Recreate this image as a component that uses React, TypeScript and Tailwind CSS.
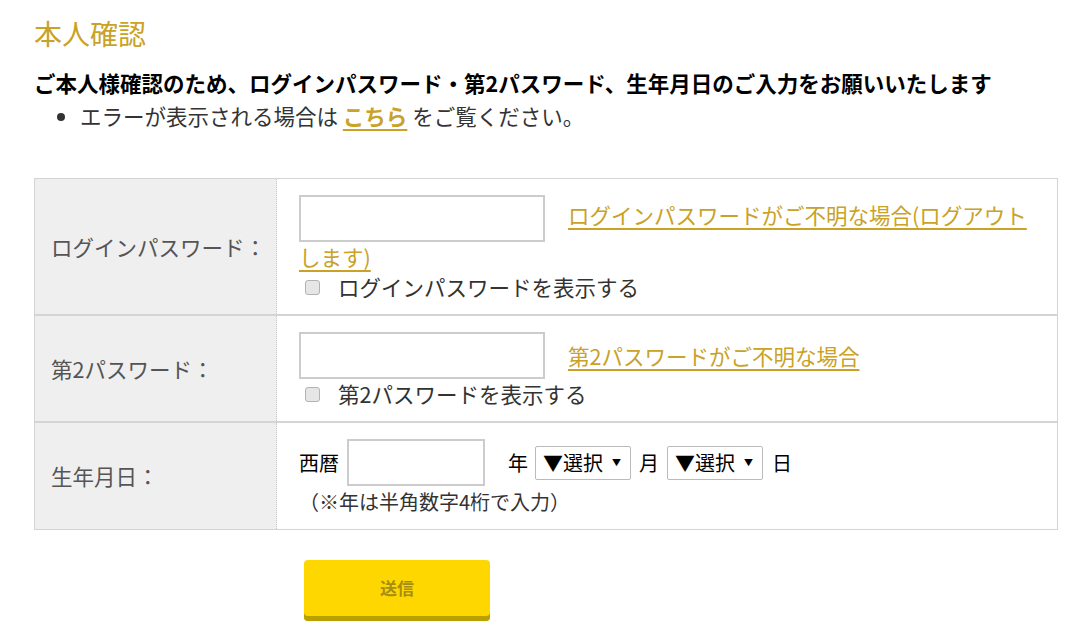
import * as React from "react"

const font = "font-['Meiryo','Noto_Sans_CJK_JP',sans-serif]"

function Checkbox({ id, label }: { id: string; label: string }) {
  return (
    <label htmlFor={id} className="flex items-center h-[30px]">
      <input
        id={id}
        type="checkbox"
        className="appearance-none ml-[6px] mr-[18px] w-[15px] h-[15px] rounded-[3px] border border-[#b3b3b3] bg-[#e6e6e6]"
      />
      <span>{label}</span>
    </label>
  )
}

function Select() {
  return (
    <span className="relative inline-flex">
      <select className="appearance-none w-[96px] h-[34px] pl-[7px] pr-[20px] border border-[#bbb] rounded-[2px] bg-white text-[20px] text-black">
        <option>▼選択</option>
      </select>
      <span className="absolute right-[10px] top-[12px] text-[9px] leading-none text-black pointer-events-none">▼</span>
    </span>
  )
}

function Row({ label, children, last }: { label: string; children: React.ReactNode; last?: boolean }) {
  return (
    <div className={`flex ${last ? "" : "border-b-2 border-[#d4d4d4]"}`}>
      <div className="w-[242px] shrink-0 bg-[#efefef] border-r border-dotted border-[#c8c8c8] flex items-center pl-[16px] text-[#555]">
        {label}
      </div>
      <div className="flex-1 pl-[22px] pr-[22px] pt-[16px] pb-[12px]">{children}</div>
    </div>
  )
}

export default function App() {
  const link = "text-[#c9a227] underline decoration-2 underline-offset-[4px]"
  return (
    <div className={`${font} bg-white w-[1088px] h-[638px] overflow-hidden text-[21.5px] text-[#333]`}>
      <div className="pl-[34px] pt-[14px]">
        <h1 className="text-[28px] leading-[38px] text-[#c9a227]">本人確認</h1>
        <p className="mt-[16px] font-bold text-black leading-[30px]">
          ご本人様確認のため、ログインパスワード・第2パスワード、生年月日のご入力をお願いいたします
        </p>
        <ul className="list-disc pl-[46px] leading-[36px]">
          <li>
            エラーが表示される場合は <a className={`${link} font-bold`}>こちら</a> をご覧ください。
          </li>
        </ul>
      </div>

      <div className="mt-[44px] ml-[34px] w-[1024px] border border-[#d4d4d4] leading-[30px]">
        <Row label="ログインパスワード：">
          <div>
            <input
              type="password"
              className="align-middle w-[246px] h-[47px] border-2 border-[#ccc] mr-[23px]"
            />
            <a className={link}>ログインパスワードがご不明な場合(ログアウトします)</a>
          </div>
          <Checkbox id="c1" label="ログインパスワードを表示する" />
        </Row>
        <Row label="第2パスワード：">
          <div className="flex items-center">
            <input type="password" className="w-[246px] h-[47px] border-2 border-[#ccc] mr-[23px]" />
            <a className={link}>第2パスワードがご不明な場合</a>
          </div>
          <Checkbox id="c2" label="第2パスワードを表示する" />
        </Row>
        <Row label="生年月日：" last>
          <div className="flex items-center h-[47px] text-[20px] text-black">
            <span>西暦</span>
            <input type="text" className="ml-[8px] mr-[23px] w-[138px] h-[47px] border-2 border-[#ccc]" />
            <span className="mr-[7px]">年</span>
            <Select />
            <span className="mx-[8px]">月</span>
            <Select />
            <span className="ml-[9px]">日</span>
          </div>
          <p className="text-[20px] mt-[1px]">（※年は半角数字4桁で入力）</p>
        </Row>
      </div>

      <div className="mt-[30px] ml-[304px]">
        <button className="w-[186px] h-[61px] rounded-[4px] bg-[#ffd700] shadow-[inset_0_-5px_0_#b8a000] pb-[5px] text-[17px] font-bold text-[#a68d12]">
          送信
        </button>
      </div>
    </div>
  )
}
